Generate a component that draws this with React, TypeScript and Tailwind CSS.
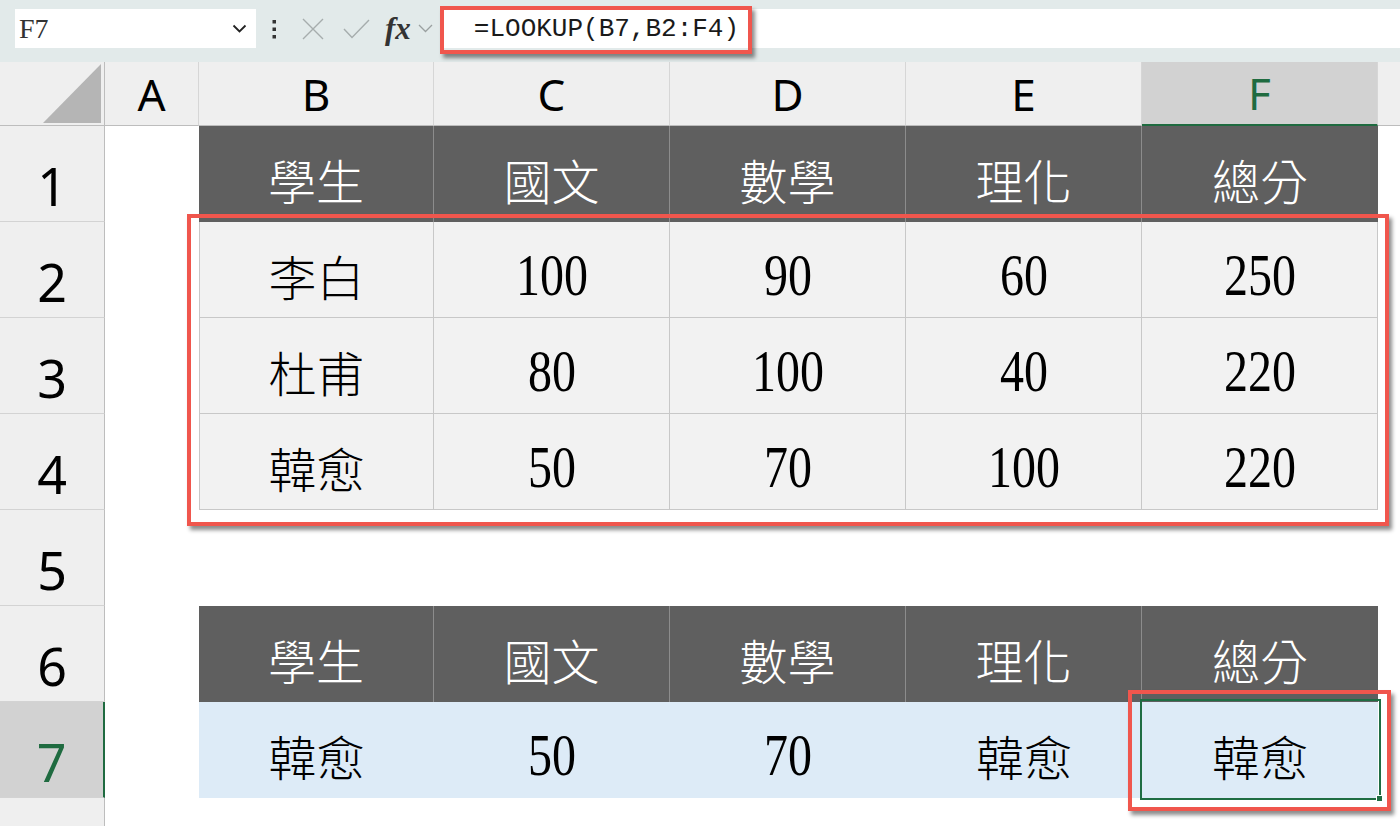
import React from "react";

// 欄寬（px）：列標題、A、B..F，其餘填滿
const COLS = ["A", "B", "C", "D", "E", "F"];

const HEAD = ["學生", "國文", "數學", "理化", "總分"];
const BODY = [
  ["李白", "100", "90", "60", "250"],
  ["杜甫", "80", "100", "40", "220"],
  ["韓愈", "50", "70", "100", "220"],
];
const RESULT = ["韓愈", "50", "70", "韓愈", "韓愈"];

const SANS = "[font-family:'Noto_Sans','Open_Sans',sans-serif]";
const CJK = "[font-family:'Noto_Sans_CJK_TC','Noto_Sans_CJK_SC',sans-serif]";
const SERIF = "[font-family:'Liberation_Serif','Noto_Sans_CJK_TC',serif]";

function CellText({ text }: { text: string }) {
  // 數字用窄襯線體，中文用 CJK
  if (/^\d+$/.test(text)) {
    return (
      <span className={`${SERIF} inline-block scale-x-80 text-[60px] leading-none`}>{text}</span>
    );
  }
  return <span className={`${CJK} font-light text-[48px] leading-none`}>{text}</span>;
}

function RowHeader({ n, active }: { n: number | string; active?: boolean }) {
  return (
    <div
      className={`${SANS} flex items-center justify-center pt-[24px] text-[52px] leading-none border-b border-b-[#d3d3d3] ${
        active
          ? "bg-[#d2d2d2] text-[#1f6b40] border-r-2 border-r-[#1f6b40]"
          : "bg-[#efefef] text-black border-r border-r-[#bdbdbd]"
      }`}
    >
      {n}
    </div>
  );
}

function ColHeader({ c, active }: { c: string; active?: boolean }) {
  return (
    <div
      className={`${SANS} flex items-center justify-center text-[44px] leading-none border-r border-r-[#d6d6d6] ${
        active
          ? "bg-[#d2d2d2] text-[#1f6b40] border-b-2 border-b-[#1f6b40]"
          : "bg-[#efefef] text-black border-b border-b-[#bdbdbd]"
      }`}
    >
      {c}
    </div>
  );
}

function DarkRow({ cells }: { cells: string[] }) {
  return (
    <>
      {cells.map((t, i) => (
        <div
          key={i}
          className={`flex items-center justify-center pt-[10px] bg-[#5f5f5f] text-white ${
            i < cells.length - 1 ? "border-r border-r-[#8c8c8c]" : ""
          }`}
        >
          <CellText text={t} />
        </div>
      ))}
    </>
  );
}

function LightRow({ cells }: { cells: string[] }) {
  return (
    <>
      {cells.map((t, i) => (
        <div
          key={i}
          className={`flex items-center justify-center pt-[10px] bg-[#f2f2f2] text-black border-r border-b border-[#c8c8c8] ${
            i === 0 ? "border-l" : ""
          }`}
        >
          <CellText text={t} />
        </div>
      ))}
    </>
  );
}

function BlueRow({ cells }: { cells: string[] }) {
  return (
    <>
      {cells.map((t, i) => (
        <div key={i} className="flex items-center justify-center pt-[10px] bg-[#ddebf7] text-black">
          <CellText text={t} />
        </div>
      ))}
    </>
  );
}

function Blank() {
  return <div className="bg-white" />;
}

function FormulaBar() {
  return (
    <div className="h-[62px] bg-[#e2eaea] flex items-start pt-[9px]">
      {/* 名稱方塊 */}
      <div className="ml-[15px] w-[241px] h-[39px] bg-white flex items-center justify-between pl-[4px] pr-[9px]">
        <span className={`${SERIF} text-[28px] text-[#333] leading-none`}>F7</span>
        <svg width="15" height="9" viewBox="0 0 15 9">
          <path d="M1.5 1.5 L7.5 7.5 L13.5 1.5" fill="none" stroke="#222" strokeWidth="1.8" />
        </svg>
      </div>
      <div className="flex items-center h-[39px]">
        {/* 三個點 */}
        <svg width="8" height="20" viewBox="0 0 8 20" className="ml-[14px]">
          <rect x="2.5" y="1" width="3.5" height="3.5" fill="#333" />
          <rect x="2.5" y="8.5" width="3.5" height="3.5" fill="#333" />
          <rect x="2.5" y="16" width="3.5" height="3.5" fill="#333" />
        </svg>
        {/* 取消 */}
        <svg width="22" height="22" viewBox="0 0 22 22" className="ml-[24px]">
          <path d="M1 1 L21 21 M21 1 L1 21" stroke="#a6adad" strokeWidth="1.4" fill="none" />
        </svg>
        {/* 確認 */}
        <svg width="27" height="20" viewBox="0 0 27 20" className="ml-[19px]">
          <path d="M1 10 L9 18.5 L26 1" stroke="#a6adad" strokeWidth="1.4" fill="none" />
        </svg>
        <span className={`${SERIF} ml-[15px] italic font-bold text-[31px] leading-none text-[#333]`}>fx</span>
        <svg width="15" height="9" viewBox="0 0 15 9" className="ml-[7px]">
          <path d="M1 1 L7.5 7.5 L14 1" fill="none" stroke="#9aa0a0" strokeWidth="1.3" />
        </svg>
      </div>
      {/* 公式輸入 */}
      <div className="ml-[7px] flex-1 h-[39px] bg-white flex items-center pl-[34px]">
        <span className="[font-family:'Liberation_Mono',monospace] text-[26px] leading-none text-[#1a1a1a]">
          =LOOKUP(B7,B2:F4)
        </span>
      </div>
    </div>
  );
}

export default function App() {
  return (
    <div className="relative w-[1400px] h-[826px] overflow-hidden bg-white">
      <FormulaBar />

      <div className="grid grid-cols-[105px_94px_235px_236px_236px_236px_236px_1fr] grid-rows-[64px_repeat(7,96px)_1fr] h-[764px]">
        {/* 左上角 */}
        <div className="bg-[#efefef] border-r border-b border-[#bdbdbd] flex items-end justify-end pr-[3px] pb-[2px]">
          <svg width="58" height="59" viewBox="0 0 58 59">
            <polygon points="58,0 58,59 0,59" fill="#b5b5b5" />
          </svg>
        </div>
        {COLS.map((c) => (
          <ColHeader key={c} c={c} active={c === "F"} />
        ))}
        <div className="bg-[#efefef] border-b border-b-[#bdbdbd]" />

        {/* 第 1 列 */}
        <RowHeader n={1} />
        <Blank />
        <DarkRow cells={HEAD} />
        <Blank />

        {/* 第 2-4 列 */}
        {BODY.map((row, r) => (
          <React.Fragment key={r}>
            <RowHeader n={r + 2} />
            <Blank />
            <LightRow cells={row} />
            <Blank />
          </React.Fragment>
        ))}

        {/* 第 5 列 */}
        <RowHeader n={5} />
        <Blank />
        <Blank />
        <Blank />
        <Blank />
        <Blank />
        <Blank />
        <Blank />

        {/* 第 6 列 */}
        <RowHeader n={6} />
        <Blank />
        <DarkRow cells={HEAD} />
        <Blank />

        {/* 第 7 列 */}
        <RowHeader n={7} active />
        <Blank />
        <BlueRow cells={RESULT} />
        <Blank />

        {/* 第 8 列（部分） */}
        <div className="bg-[#efefef] border-r border-r-[#bdbdbd]" />
        <div className="col-span-7 bg-white" />
      </div>

      {/* 選取框 F7 */}
      <div className="absolute left-[1140px] top-[699px] w-[241px] h-[101px] border-[2.5px] border-[#1f6d43]">
        <div className="absolute right-[-4px] bottom-[-4px] w-[7px] h-[7px] bg-[#1f6d43] border border-white" />
      </div>

      {/* 紅色標註框 */}
      <div className="absolute left-[440px] top-[6px] w-[312px] h-[48px] border-[4px] border-[#f0564d] shadow-[3px_4px_4px_rgba(0,0,0,0.45)]" />
      <div className="absolute left-[187px] top-[214px] w-[1202px] h-[312px] border-[4px] border-[#f0564d] shadow-[3px_4px_4px_rgba(0,0,0,0.45)]" />
      <div className="absolute left-[1128px] top-[690px] w-[263px] h-[121px] border-[4px] border-[#f0564d] shadow-[3px_4px_4px_rgba(0,0,0,0.45)]" />
    </div>
  );
}
